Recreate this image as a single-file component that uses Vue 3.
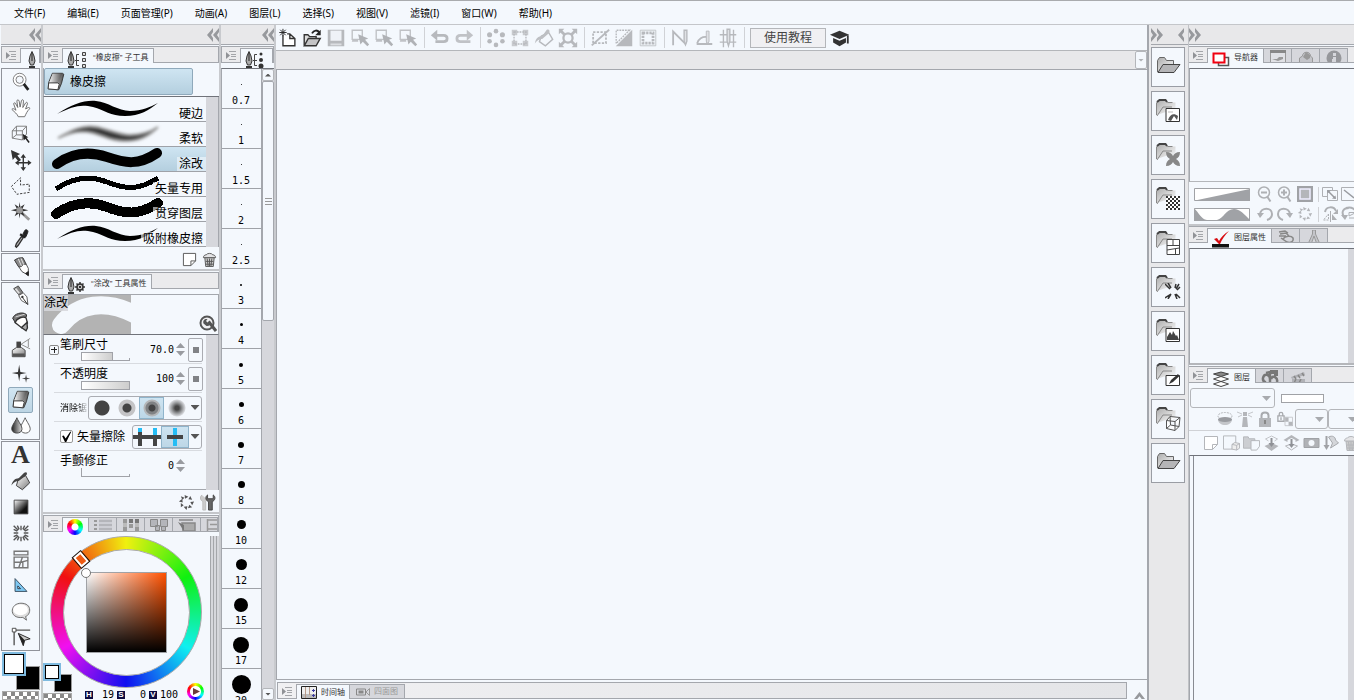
<script setup>
import { h, ref } from 'vue'

const Icon = (props) =>
  h('svg', { class: 'icon', width: props.w || 24, height: props.h || props.w || 24, 'aria-hidden': 'true' }, [
    h('use', { href: '#' + props.n })
  ])
Icon.props = ['n', 'w', 'h']

const menus = ['文件(F)', '编辑(E)', '页面管理(P)', '动画(A)', '图层(L)', '选择(S)', '视图(V)', '滤镜(I)', '窗口(W)', '帮助(H)']

const toolGroups = [
  ['zoom', 'hand', 'cube', 'move', 'lasso', 'wand', 'dropper'],
  ['pencil'],
  ['pen', 'marker', 'airbrush', 'sparkle', 'eraser', 'blend'],
  ['letter', 'bucket', 'gradient', 'burst', 'frame', 'ruler', 'balloon', 'correct']
]
const activeTool = ref('eraser')

const commandGroups = [
  ['new', 'open', 'save', 'selcur', 'selcur', 'selcur'],
  ['undo', 'redo'],
  ['spin', 'corners', 'fillarea', 'expand'],
  ['desel', 'invsel', 'border'],
  ['snap1', 'snap2', 'snap3']
]

const brushes = ['硬边', '柔软', '涂改', '矢量专用', '贯穿图层', '吸附橡皮擦']
const activeBrush = ref(2)

const sizes = [
  ['0.7', 1], ['1', 1], ['1.5', 1], ['2', 1], ['2.5', 1], ['3', 2], ['4', 3], ['5', 4], ['6', 5],
  ['7', 6], ['8', 7], ['10', 9], ['12', 11], ['15', 14], ['17', 16], ['20', 19]
]

const sliders = [
  { id: 'size', label: '笔刷尺寸', value: '70.0', fill: 31, plus: true },
  { id: 'opacity', label: '不透明度', value: '100', fill: 48 }
]
const aa = ref(2)
const vec = ref(1)
const vecOn = ref(true)

const materials = ['', 'm-photo', 'm-cross', 'm-check', 'm-frame', 'm-burst', 'm-mount', 'm-pen', 'm-cube', '']
const hsv = [['H', '19'], ['S', '0'], ['V', '100']]
</script>

<template>
  <div class="app">
    <svg class="defs" aria-hidden="true">
      <defs>
        <linearGradient id="gm" x1="0" y1="0" x2="1" y2="1"><stop offset="0" stop-color="#fff" /><stop offset="1" stop-color="#777" /></linearGradient>
        <linearGradient id="ge" x1="0" y1="0" x2="1" y2="0"><stop offset="0" stop-color="#eee" /><stop offset="1" stop-color="#555" /></linearGradient>
        <linearGradient id="gk" x1="0" y1="0" x2="1" y2="1"><stop offset="0" stop-color="#fff" /><stop offset=".7" stop-color="#111" /></linearGradient>
        <linearGradient id="gh" x1="0" y1="0" x2="1" y2="0"><stop offset="0" stop-color="#222" /><stop offset="1" stop-color="#ddd" /></linearGradient>
        <linearGradient id="gf" x1="0" y1="0" x2="1" y2="1"><stop offset="0" stop-color="#aaa" /><stop offset=".6" stop-color="#ddd" /><stop offset="1" stop-color="#f4f8fd" /></linearGradient>
        <filter id="soft" x="-10%" y="-30%" width="120%" height="160%"><feGaussianBlur stdDeviation="1.8" /></filter>
      </defs>

      <symbol id="grip" viewBox="0 0 10 9"><path d="M0 1l4 3.5L0 8z" fill="#909296" /><path d="M3 .5h7M5 3.5h5M5 5.5h5M3 8.5h7" stroke="#a3a5a9" /></symbol>
      <symbol id="chl" viewBox="0 0 12 14"><path d="M6 0L0 7l6 7V10L4 7l2-3zM12 0L6 7l6 7V10L10 7l2-3z" fill="#97999d" /></symbol>
      <symbol id="chr" viewBox="0 0 12 14"><path d="M0 0l6 7-6 7V10l2-3L0 4zM6 0l6 7-6 7V10l2-3-2-3z" fill="#97999d" /></symbol>
      <symbol id="ch1" viewBox="0 0 6 14"><path d="M6 0L0 7l6 7V10L4 7l2-3z" fill="#97999d" /></symbol>
      <symbol id="nib" viewBox="0 0 8 18"><path d="M4 .5L2 5l-1 5 1.500 4h3L7 10 6 5z" fill="#aaa" stroke="#333" /><path d="M4 2v8" stroke="#222" /><path d="M1 15h6v2H1z" fill="#333" /></symbol>
      <symbol id="tree" viewBox="0 0 12 18"><path d="M4 3.500H1.500v11H4M0 9.500h4" fill="none" stroke="#444" /><path d="M7.500 1.500h3v3h-3zM7.500 7.500h3v3h-3zM7.500 13.500h3v3h-3z" fill="#ddd" stroke="#444" /></symbol>
      <symbol id="dots" viewBox="0 0 12 18"><path d="M4 3.500H1.500v11H4M0 9.500h4" fill="none" stroke="#444" /><g fill="#333"><circle cx="8" cy="3" r="1.500" /><circle cx="8" cy="9" r="2" /><circle cx="8" cy="15" r="2.500" /></g></symbol>
      <symbol id="gear" viewBox="0 0 10 10"><path d="M5 0v10M0 5h10M1.500 1.500l7 7M8.500 1.500l-7 7" stroke="#333" stroke-width="1.500" /><circle cx="5" cy="5" r="3" fill="#ccc" stroke="#333" stroke-width="1.500" /><circle cx="5" cy="5" r="1" /></symbol>

      <symbol id="zoom" viewBox="0 0 24 24"><circle cx="10.500" cy="9.500" r="7" fill="#fff" stroke="#777" /><circle cx="10.500" cy="9.500" r="4" fill="#f4f8fd" stroke="#777" /><path d="M15 14l5 6.500" stroke="#222" stroke-width="3" /></symbol>
      <symbol id="hand" viewBox="0 0 24 24"><path d="M9 21.500c-1-3-4-5-7-8 1-1.500 3-.5 4.500 1L4 7.500c0-1.500 1.800-1.500 2.300 0l2.200 4-1-7c0-1.800 2-1.800 2.500 0l1 6.500 1.500-7c.5-1.600 2.300-1.200 2.200.5L14 11.500l3-5c.9-1.400 2.400-.6 2 1l-2 5.500 3-1.500c1.500-.5 2 1 1 1.800-2 1.700-3.500 5-5 8.200z" fill="#fff" stroke="#666" /></symbol>
      <symbol id="cube" viewBox="0 0 24 24"><path d="M2.500 8.500h11v10l-11-2zM2.500 8.500L7 3.500h11l-4.500 5M18 3.500V12l-4.500 6.500M7 3.500V13h8M7 13l-4.500 3.500" fill="none" stroke="#777" /><path d="M14 12l6 3.500-2 .7 3.500 4.500-1.300 1-3.500-4.500L15 19z" fill="#222" /></symbol>
      <symbol id="move" viewBox="0 0 24 24"><path d="M1 1l10 4.500-3 1.500 4 5-2.500 2-4-5L3 12z" fill="#333" /><path d="M14.500 8v14M7 15h15" stroke="#333" stroke-width="1.500" /><path d="M14.500 5.500l3 4h-6zM14.500 24l3-4h-6zM5.500 15l4-3v6zM23.500 15l-4-3v6z" fill="#333" /></symbol>
      <symbol id="lasso" viewBox="0 0 24 24"><path d="M1.500 12.500l10-9.500v8l9.500-1v9L7.500 21z" fill="none" stroke="#333" stroke-dasharray="2.500 1.500" /></symbol>
      <symbol id="wand" viewBox="0 0 24 24"><path d="M13 13l8 7.500" stroke="#999" stroke-width="3" /><path d="M10.500 1l.8 5.500L16 3.500l-2.500 5 6.500 1.500-6.500 1.500 2.500 5-4.700-3-.8 5.500-.8-5.500-4.700 3 2.500-5L1 10l6.500-1.500L5 3.500l4.700 3z" fill="#333" /><circle cx="10.500" cy="10" r="3.500" fill="#999" /></symbol>
      <symbol id="dropper" viewBox="0 0 24 24"><path d="M12.500 10.500l2 1L9 20l-2 2-1-1 1-3z" fill="#bbb" stroke="#333" stroke-width="1.500" /><path d="M11 8l6 3.500" stroke="#222" stroke-width="2.500" /><path d="M14 8l2-4c1-2 4-1 3.500 1.500l-2 5z" fill="#222" stroke="#222" /></symbol>
      <symbol id="pencil" viewBox="0 0 24 24"><path d="M5 4.500l4-2 5-.5 6 11.500v7.500l-7-4z" fill="#fff" stroke="#444" /><path d="M5 4.500l4-2 5-.5 3.500 7-3 0-2 2.500-3 .5z" fill="#8a8a8a" stroke="#444" /><path d="M9 3l3.500 8M12 2.500l3 7" stroke="#e8e8e8" /><path d="M17 19l3 2.500V17z" fill="#222" stroke="#222" /></symbol>
      <symbol id="pen" viewBox="0 0 24 24"><path d="M4 4l5-3 5 7-4 3z" fill="#888" stroke="#444" /><path d="M6 4l4 5" stroke="#ddd" stroke-width="2" /><path d="M9.500 11.500l5-3 4 4.500 1 8-7-4z" fill="#fff" stroke="#555" /><path d="M13.500 13.500l6 8" stroke="#222" /><circle cx="13.500" cy="13" r="1.300" fill="#333" /></symbol>
      <symbol id="marker" viewBox="0 0 24 24"><path d="M3 8c1-5 11-8 15-4v2l-12 7z" fill="#777" stroke="#222" /><path d="M6 6.500l10-3" stroke="#ddd" /><path d="M5.500 12.500c2-5 9-7 12-5L19 13l-6 5.500z" fill="#fff" stroke="#333" stroke-width="1.500" /><path d="M12.500 18l6-5.500.5 6-1.500 3z" fill="#aaa" stroke="#333" stroke-width="1.500" /></symbol>
      <symbol id="airbrush" viewBox="0 0 24 24"><path d="M2.500 14.500L7 11.500h5.500l4 3v7h-14z" fill="url(#gm)" stroke="#444" /><path d="M7 5h5v6H7z" fill="#444" /><path d="M12 8l10-6.500M12 8l10 5M20 3v8" fill="none" stroke="#888" /><path d="M3 18h13v3H3z" fill="#555" /></symbol>
      <symbol id="sparkle" viewBox="0 0 24 24"><path d="M10 2l1.300 7.700L18 11l-6.700 1.300L10 20l-1.300-7.700L2 11l6.700-1.300z" fill="#333" /><path d="M17.500 12.500l.8 3.700 3.700.8-3.700.8-.8 3.700-.8-3.700-3.700-.8 3.700-.8z" fill="#444" /></symbol>
      <symbol id="eraser" viewBox="0 0 24 24"><path d="M8 2.500h11l1.500 1-2.500 10-3 7-11.500-1 .5-7z" fill="url(#ge)" stroke="#333" stroke-linejoin="round" /><path d="M8.500 3h10L15 12H5z" fill="url(#ge)" /><path d="M4 13h10l1.500 1.500L14 20.500l-10.500-1z" fill="#fff" stroke="#333" stroke-linejoin="round" /></symbol>
      <symbol id="blend" viewBox="0 0 24 24"><path d="M16.500 3c2 5 6 9 5.500 13-1 5-9 5-10.500 0-.8-4 3-8 5-13z" fill="#fff" stroke="#555" /><path d="M7.500 3c2 5 6 9 5.500 13-1 5-10 5-11 0C1.200 12 5.500 8 7.500 3z" fill="url(#gh)" stroke="#444" /></symbol>
      <symbol id="bucket" viewBox="0 0 24 24"><path d="M9 10l8-4 4.500 8-8 7.500L7 17z" fill="url(#gm)" stroke="#333" /><path d="M1.500 17c1-5 4-8 8-8l6-6c3-2 4 1 2 3l-8 6c-3 0-5 1-8 5z" fill="#444" /></symbol>
      <symbol id="gradient" viewBox="0 0 24 24"><path d="M4.500 4.500h15v15h-15z" fill="url(#gk)" stroke="#444" /></symbol>
      <symbol id="burst" viewBox="0 0 24 24"><path d="M12 4v5M12 16v5M4 12h5M15 12h5M4 4l5 5M20 4l-5 5M4 20l5-5M20 20l-5-5M8 4l2 4M16 4l-2 4M4 8l4 2M20 8l-4 2M4 16l4-2M20 16l-4-2M8 20l2-4M16 20l-2-4" stroke="#555" stroke-width="1.500" /></symbol>
      <symbol id="frame" viewBox="0 0 24 24"><path d="M4.500 3.500h15v4h-15zM4.500 10h15v11.500h-15zM4.500 15.500h7.500l7.500-2M13.500 10l-4 11.500M14 15v6.500" fill="none" stroke="#777" stroke-width="1.500" /></symbol>
      <symbol id="ruler" viewBox="0 0 24 24"><path d="M5.500 5v14h13z" fill="#7ec8f2" stroke="#36495a" /><path d="M8.500 13v3h3z" fill="#f4f8fd" stroke="#234" /></symbol>
      <symbol id="balloon" viewBox="0 0 24 24"><path d="M12 3.500c6 0 9.500 3 9.500 7.500S18 18 17 18l1 4-4-3c-8 1-12-3-11.500-8 .5-4 4-7.500 9.500-7.500z" fill="#ddd" stroke="#666" /><ellipse cx="11.500" cy="10.500" rx="8" ry="6" fill="#fff" /></symbol>
      <symbol id="correct" viewBox="0 0 24 24"><path d="M5 4.500h17M4.500 5v16" stroke="#555" stroke-width="1.500" /><path d="M2.500 2.500h4v4h-4z" fill="#fff" stroke="#444" /><path d="M9 8l13 6-6 1.500-1.500 6z" fill="#ccc" stroke="#222" /><path d="M9 8l7 7.500-1.500 6z" fill="#222" /></symbol>

      <symbol id="new" viewBox="0 0 24 24"><path d="M6.500 9v11.500h13v-8L14 7.500h-3M14 7.500v5h5.500" fill="#fff" stroke="#333" stroke-width="1.500" /><path d="M6.500 2v8M2.500 6h8M3.500 3l6 6M9.500 3l-6 6" stroke="#222" /></symbol>
      <symbol id="open" viewBox="0 0 24 24"><path d="M3.500 20V8.500h4l2 2h7V13" fill="#ddd" stroke="#333" stroke-width="1.500" /><path d="M3.500 20.500L8 12.500h13l-4.500 8z" fill="#c4c4c6" stroke="#333" stroke-width="1.500" /><path d="M12 7c2-4 6-4 8-1" fill="none" stroke="#222" stroke-width="2" /><path d="M21.500 3v6h-6z" fill="#222" /></symbol>
      <symbol id="save" viewBox="0 0 24 24"><path d="M3 3h18v18H3z" fill="#b7b9bd" /><path d="M6 4h12v11H6z" fill="#eff2f7" /><path d="M6 18h12v2H6z" fill="#dcdee2" /></symbol>
      <symbol id="selcur" viewBox="0 0 24 24"><path d="M3.500 3.500h11v10h-11z" fill="none" stroke="#c0c2c6" stroke-width="1.500" /><path d="M4 13h6v3H3z" fill="#c0c2c6" /><path d="M10 8l11 4.500-3.500 1.500 4.500 5-2 2-5-5-2.500 3z" fill="#b0b2b6" /></symbol>
      <symbol id="undo" viewBox="0 0 24 24"><path d="M7 9h9c5 0 5 7 0 7H7" fill="none" stroke="#b7b9bd" stroke-width="3" /><path d="M2 9l7-6v12z" fill="#b7b9bd" /></symbol>
      <symbol id="redo" viewBox="0 0 24 24"><path d="M17 9H8c-5 0-5 7 0 7h11" fill="none" stroke="#c0c2c6" stroke-width="3" /><path d="M22 9l-7-6v12z" fill="#c0c2c6" /></symbol>
      <symbol id="spin" viewBox="0 0 24 24"><g fill="#b7b9bd"><circle cx="12" cy="4.500" r="2.500" /><circle cx="12" cy="19.500" r="2.500" /><circle cx="5" cy="8.500" r="2.800" /><circle cx="19" cy="8.500" r="2.800" /><circle cx="5" cy="15.500" r="2.500" /><circle cx="19" cy="15.500" r="2.500" /></g></symbol>
      <symbol id="corners" viewBox="0 0 24 24"><path d="M3 3h6v6H3zM15 3h6v6h-6zM3 15h6v6H3zM15 15h6v6h-6z" fill="#c8cace" /><path d="M5.500 5.500h13v13h-13z" fill="none" stroke="#b7b9bd" stroke-width="1.500" stroke-dasharray="2 1" /></symbol>
      <symbol id="fillarea" viewBox="0 0 24 24"><path d="M9 10l8-4 4.500 7.500-8 7L7 16z" fill="none" stroke="#b7b9bd" stroke-width="1.500" /><path d="M2 18c1-6 4-8 8-8l5-7c3-1 4 2 2 4l-7 6c-3 0-5 1-8 5z" fill="#bdbfc3" /></symbol>
      <symbol id="expand" viewBox="0 0 24 24"><path d="M4 4l16 16M20 4L4 20" stroke="#b7b9bd" stroke-width="3" /><circle cx="12" cy="12" r="5" fill="#f4f8fd" stroke="#b7b9bd" stroke-width="2.500" /><path d="M2 2h6L2 8zM22 2h-6l6 6zM2 22h6l-6-6zM22 22h-6l6-6z" fill="#b7b9bd" /></symbol>
      <symbol id="desel" viewBox="0 0 24 24"><path d="M4.500 5.500h14v12h-14z" fill="none" stroke="#b7b9bd" stroke-width="2" stroke-dasharray="2.500 1.500" /><path d="M3 20L22 3" stroke="#b7b9bd" stroke-width="2" /></symbol>
      <symbol id="invsel" viewBox="0 0 24 24"><path d="M21 3v18H3z" fill="#b7b9bd" /><path d="M18 3.500H3.500V18L18 3.500z" fill="none" stroke="#b7b9bd" stroke-width="1.500" stroke-dasharray="2 1" /></symbol>
      <symbol id="border" viewBox="0 0 24 24"><path d="M3.500 3.500h17v17h-17z" fill="none" stroke="#c0c2c6" /><path d="M6.500 6.500h11v11h-11z" fill="none" stroke="#b7b9bd" stroke-width="3" stroke-dasharray="2.500 1" /></symbol>
      <symbol id="snap1" viewBox="0 0 24 24"><path d="M4.500 20V5l14 14" fill="none" stroke="#b7b9bd" stroke-width="2" /><path d="M16.500 3.500h3v12l-1.500 4-1.500-4z" fill="#dfe1e5" stroke="#b7b9bd" stroke-width="1.500" /></symbol>
      <symbol id="snap2" viewBox="0 0 24 24"><path d="M4 18.500h17M4.500 18c1-5 6-8 11-7v7" fill="none" stroke="#b7b9bd" stroke-width="2" /><path d="M14.500 4.500h3v11l-1.500 3-1.500-3z" fill="#dfe1e5" stroke="#b7b9bd" /></symbol>
      <symbol id="snap3" viewBox="0 0 24 24"><path d="M3 8.500h18M3 16.500h18M7 3v19M18 3v19" stroke="#b7b9bd" stroke-width="1.500" /><path d="M11 2.500h3v13l-1.500 5-1.500-5z" fill="#dfe1e5" stroke="#b7b9bd" stroke-width="1.500" /></symbol>
      <symbol id="hat" viewBox="0 0 24 24"><path d="M11.500 4L22 8.500 11.500 13 1 8.500z" fill="#333" /><path d="M4.500 12l7 3 7-3v5l-7 4-7-4z" fill="#333" /><path d="M20.500 9v9" stroke="#333" stroke-width="2" /></symbol>

      <symbol id="page" viewBox="0 0 16 16"><path d="M1.500 1.500h13v8l-5 5h-8zM9.500 14.500v-5h5" fill="#fff" stroke="currentColor" /></symbol>
      <symbol id="trash" viewBox="0 0 16 16"><path d="M3 6l1 9.500h8L13 6z" fill="#ccc" stroke="currentColor" /><path d="M5.500 7l1 8M8 7v8M10.500 7l-1 8M4 10h8M4 13h8" stroke="currentColor" /><path d="M1.500 6c0-2 1.500-3 3-3 1-2 6-2 7 0 1.500 0 3 1 3 3z" fill="#e4e4e6" stroke="currentColor" /></symbol>
      <symbol id="wrenchmag" viewBox="0 0 18 18"><circle cx="8" cy="8" r="6.500" fill="#f0f0f2" stroke="#555" stroke-width="2" /><path d="M9.500 6.500L17 16" stroke="#555" stroke-width="3" /><path d="M4.500 8.500c-1-3 1-5 4-4.500L7 6l2 2 2.500-1c.5 2.500-1.500 4.500-4 4z" fill="#555" /></symbol>
      <symbol id="reset" viewBox="0 0 18 18"><g fill="currentColor"><path d="M7 1l4 2-3.500 2zM13 2l2 4-4-.5zM17 8l-2 4-2-3.500zM15 14l-4.500 1 1.500-3.500zM9 17l-3-3.500 4-.5zM3 14l0-4.500L6 12zM1 8l3.500-3 .5 4zM3 2.500L7 4 4.500 6z" /></g></symbol>
      <symbol id="wrench" viewBox="0 0 18 18"><path d="M2 1c-3 3-1 6 1 7v9h3V8l2-2" fill="#ccc" stroke="#bbb" /><path d="M8 1C5 3 6 7 9 8v9h4V8c3-1 4-5 1-7v4h-6z" fill="#666" stroke="#444" /></symbol>
      <symbol id="vec1" viewBox="0 0 28 20"><path d="M0 10h28" stroke="#444" stroke-width="4" /><path d="M7 5v14M22 8v11" stroke="#444" stroke-width="4" /><path d="M7 1v4M22 1v7" stroke="#25bdf5" stroke-width="4" /></symbol>
      <symbol id="vec2" viewBox="0 0 28 20"><path d="M14 1v18" stroke="#25bdf5" stroke-width="4" /><path d="M6 10h16" stroke="#444" stroke-width="4" /></symbol>

      <symbol id="folder" viewBox="0 0 30 26"><path d="M4.500 18V6.500l2-3h5l2 3h7v4" fill="url(#gf)" stroke="#666" /><path d="M5 18.500l5-8h17l-6 8z" fill="#b5b5b7" stroke="#444" /></symbol>
      <symbol id="folder2" viewBox="0 0 30 30"><path d="M3.500 19V7l3-3.500h6l2 3h8v9h-8z" fill="url(#gf)" /><path d="M3.500 19V7l3-3.500h6l2 3h5M4 20l6-9h9" fill="none" stroke="#888" /><path d="M4 6l2.500-2h6l1.500 2" stroke="#444" stroke-width="2" fill="none" /></symbol>
      <symbol id="m-photo" viewBox="0 0 16 16"><path d="M1 1.500h13.500v13H1z" fill="#fff" stroke="#333" /><path d="M3 13c2-6 6-7 10-4l-1 4-3-4-3 5z" fill="#555" /><path d="M3 5h5" stroke="#bbb" /></symbol>
      <symbol id="m-cross" viewBox="0 0 16 16"><path d="M1 1c4 0 6 2 7 4 1-2 3-4 7-4 0 4-2 6-4 7 2 1 4 3 4 7-4 0-6-2-7-4-1 2-3 4-7 4 0-4 2-6 4-7-2-1-4-3-4-7z" fill="#888" /></symbol>
      <symbol id="m-check" viewBox="0 0 16 16"><path d="M1 1h14v14H1z" fill="#fff" /><path d="M1 2h14M1 6h14M1 10h14M1 14h14" stroke="#333" stroke-width="2" stroke-dasharray="2 2" /><path d="M3 4h12M3 8h12M3 12h12" stroke="#333" stroke-width="2" stroke-dasharray="2 2" /></symbol>
      <symbol id="m-frame" viewBox="0 0 16 16"><path d="M2 .5h12.500v15H2zM2 6.500h12.500M8 .5v6M2 11l6-1 6.500-1M10.500 10v5.500" fill="#fff" stroke="#444" /></symbol>
      <symbol id="m-burst" viewBox="0 0 16 16"><path d="M0 1l5 5M14 1l-3 5M0 15l6-4M15 15l-4-4M3 0l3 5M11 1l-1 4M3 16l3-5M10 11l2 5M15 4l-3 3" stroke="#333" stroke-width="1.500" /></symbol>
      <symbol id="m-mount" viewBox="0 0 16 16"><path d="M1 1.500h13.500v13H1z" fill="#fff" stroke="#333" /><path d="M2 13V10l3-5 2 3 1-4 3 5 1-1 2 5z" fill="#444" /></symbol>
      <symbol id="m-pen" viewBox="0 0 16 16"><path d="M1 4.500h13.500v10H1z" fill="#fff" stroke="#333" /><path d="M4 13l2-4 7-6 1.500 2L8 11z" fill="#333" /></symbol>
      <symbol id="m-cube" viewBox="0 0 16 16"><path d="M1.500 5.500L5 1.500l10 1-1 9-4 4-8.500-2zM1.500 5.500l8.500 1 5-4M10 6.500v9M5 1.500L5.500 10l8.500 1.500M5.500 10l-4 3.500" fill="#fff" fill-opacity=".8" stroke="#555" /></symbol>

      <symbol id="redrect" viewBox="0 0 18 15"><path d="M6.500 5.500h10v8h-10z" fill="#fff" stroke="#555" stroke-width="1.500" /><path d="M1.500 1.500h11v9h-11z" fill="#fff" stroke="#f00010" stroke-width="2" /></symbol>
      <symbol id="redcheck" viewBox="0 0 18 17"><path d="M0 13h17v3.500H0z" fill="#111" /><path d="M2 8l3-1 2 3c2-4 5-7 10-10-4 4-7 8-9 13H7z" fill="#d80a10" /></symbol>
      <symbol id="t-img" viewBox="0 0 16 13"><path d="M.5 .5h15V13H.5z" fill="#e0e1e5" stroke="#999" /><path d="M0 0h16v3H0z" fill="#888" /><path d="M2 9h5l2-2h4v2l-5 2z" fill="#999" /></symbol>
      <symbol id="t-ball" viewBox="0 0 16 13"><path d="M1.500 12.500V8l3-2c0-5 8-5 8 0l2 2v4.500z" fill="#c4c5ca" stroke="#999" /><path d="M5 7l3-5 4 3v3l-3 2z" fill="#999" /></symbol>
      <symbol id="t-info" viewBox="0 0 16 13"><circle cx="8" cy="8" r="7.500" fill="#96979b" /><path d="M7 7h3v6H6V9h1zM7 3h3v3H7z" fill="#d6d7dc" /></symbol>
      <symbol id="t-anim" viewBox="0 0 16 13"><path d="M1 2l6-1 3 2M2 4l6-1 3 3M1 6l7 0M5 9c2-3 8-4 10-1 1 4-3 5-6 4L3 8" fill="none" stroke="#888" stroke-width="1.500" /></symbol>
      <symbol id="t-comp" viewBox="0 0 16 13"><path d="M6.500 0h3v4l4 9h-3L8 6l-2.500 7h-3l4-9z" fill="#c4c5ca" stroke="#999" /></symbol>
      <symbol id="layers" viewBox="0 0 18 16"><path d="M1.500 3L9 1l7.500 2L9 5.500z" fill="#888" stroke="#444" /><path d="M1.500 13L9 10.500l7.500 2.500L9 15.500zM1.500 8L9 5.500 16.500 8 9 10.500z" fill="#fff" stroke="#444" /></symbol>
      <symbol id="t-hist" viewBox="0 0 18 13"><path d="M9 0h8v6h-4V4H9z" fill="#777" /><path d="M9 9c0-5-6-6-7-1-.5 3 1 4 3 4.500M5 3l4-1v5M10 9c2-5 7-1 6 3M9 8v5" fill="none" stroke="#777" stroke-width="2.500" /></symbol>
      <symbol id="t-clap" viewBox="0 0 16 13"><path d="M1 7l13-5 1 3-13 4zM2 9h13v4H2z" fill="#b0b1b6" /><path d="M4 6l2 3M8 5l2 3M12 3l2 3M4 13l2-4M9 13l2-4" stroke="#888" stroke-width="1.500" /></symbol>
      <symbol id="t-list" viewBox="0 0 18 12"><path d="M0 2h3M0 6h3M0 10h3" stroke="#999" stroke-width="2" /><path d="M5 2h13M5 6h13M5 10h13" stroke="#b4b5ba" stroke-width="2.500" /></symbol>
      <symbol id="t-grid" viewBox="0 0 16 12"><path d="M0 0h4v4H0zM6 5h4v4H6zM0 8h4v4H0zM12 8h4v4h-4z" fill="#999" /><path d="M6 0h4v4H6zM12 0h4v4h-4z" fill="#777" /><path d="M0 4h4v4H0zM12 4h4v4h-4z" fill="#bbb" /></symbol>
      <symbol id="t-mix" viewBox="0 0 18 12"><path d="M0.500 .5h7v7h-7zM10.500 .5h7v7h-7zM5.500 6.500h4v5h-4zM11.500 7.500h4v4h-4z" fill="#b4b5ba" stroke="#888" /></symbol>
      <symbol id="t-app" viewBox="0 0 18 12"><path d="M1 1h14M4 4h13v8H5z" fill="#aaa" stroke="#888" stroke-width="1.500" /><path d="M0 3l6 3v6z" fill="#777" /></symbol>
      <symbol id="t-book" viewBox="0 0 18 12"><path d="M1.500 0v12M1 1h17M4 5.500h14M1 10h17" stroke="#999" stroke-width="1.500" /></symbol>
      <symbol id="timeline" viewBox="0 0 16 13"><path d="M.5 .5h15v12H.5z" fill="#eee" stroke="#222" /><path d="M1 8h14v4H1z" fill="#bbb" /><path d="M4.500 1v11M8.500 1v8" stroke="#b59a8a" /><path d="M12.500 3v3M12.500 8v3M11 4.500h3M11 9.500h3" stroke="#3a3aa0" /></symbol>
      <symbol id="camera" viewBox="0 0 14 8"><path d="M.5 1h9v6h-9z" fill="none" stroke="#888" /><path d="M2.500 2.500h5v3h-5z" fill="#888" /><path d="M10 4l3.500-3.500v7z" fill="none" stroke="#999" /></symbol>

      <symbol id="zout" viewBox="0 0 16 16"><circle cx="7" cy="6.500" r="5.500" fill="none" stroke="#aeb0b4" stroke-width="1.500" /><path d="M4 6.500h6M10.500 11l3 4.500" stroke="#aeb0b4" stroke-width="2" /></symbol>
      <symbol id="zin" viewBox="0 0 16 16"><circle cx="7" cy="6.500" r="5.500" fill="none" stroke="#aeb0b4" stroke-width="1.500" /><path d="M4 6.500h6M7 3.500v6M10.500 11l3 4.500" stroke="#aeb0b4" stroke-width="2" /></symbol>
      <symbol id="fit" viewBox="0 0 16 16"><path d="M0 0h16v16H0z" fill="#a0a2a6" /><path d="M3 3h10v10H3z" fill="#b4b6ba" stroke="#eef" stroke-width="1.500" /></symbol>
      <symbol id="fit2" viewBox="0 0 16 16"><path d="M.5 1.500h10v9H.5z" fill="none" stroke="#aeb0b4" /><path d="M5.500 4.500h10v10h-10z" fill="#f4f8fd" stroke="#aeb0b4" /><path d="M6 5l7 7" stroke="#999ba0" stroke-width="1.500" /><path d="M5 4l4 .5-3.500 3zM14 13l-4-.5 3.500-3z" fill="#999ba0" /></symbol>
      <symbol id="fit3" viewBox="0 0 16 16"><path d="M.5 1.500h15v13H.5z" fill="none" stroke="#aeb0b4" /><path d="M3 4l10 8" stroke="#999ba0" stroke-width="1.500" /></symbol>
      <symbol id="rotl" viewBox="0 0 16 16"><path d="M3 8c1-7 12-7 12 0 0 3-2 5-5 6" fill="none" stroke="#aeb0b4" stroke-width="2" /><path d="M0 7h7l-4 5z" fill="#aeb0b4" /></symbol>
      <symbol id="rotr" viewBox="0 0 16 16"><path d="M13 8C12 1 1 1 1 8c0 3 2 5 5 6" fill="none" stroke="#aeb0b4" stroke-width="2" /><path d="M16 7H9l4 5z" fill="#aeb0b4" /></symbol>
      <symbol id="fliph" viewBox="0 0 16 16"><path d="M3 6c1-6 9-6 11-1" fill="none" stroke="#aeb0b4" stroke-width="2" /><path d="M16 3v5h-5zM10 8l5 6h-5z" fill="#aeb0b4" /><path d="M6.500 8v6H1.500z" fill="none" stroke="#aeb0b4" stroke-dasharray="2 1" /><path d="M8.500 5v11" stroke="#aeb0b4" /></symbol>
      <symbol id="flipv" viewBox="0 0 16 16"><path d="M8 2C2 2 0 6 3 11M5 2c6-2 10 2 10 5" fill="none" stroke="#aeb0b4" stroke-width="2" /><path d="M0 9h7l-3 5z" fill="#aeb0b4" /><path d="M8 6.500h7L8 10zM8 12h7" stroke="#aeb0b4" fill="none" /></symbol>
      <symbol id="l-clip" viewBox="0 0 16 16"><ellipse cx="8" cy="5" rx="7" ry="3.500" fill="none" stroke="#b4b6ba" stroke-dasharray="2 1" /><path d="M1 8h14c0 8-14 8-14 0z" fill="#c4c6ca" /><ellipse cx="8" cy="8.500" rx="7" ry="2.500" fill="#999ba0" /></symbol>
      <symbol id="l-light" viewBox="0 0 16 16"><path d="M6 6h4l1 10H5zM6 1h4v4H6z" fill="#b4b6ba" /><path d="M0 1l5 2M16 1l-5 2M1 6l4-2M15 6l-4-2" stroke="#c4c6ca" /></symbol>
      <symbol id="l-lock" viewBox="0 0 16 16"><path d="M4.500 8V4.500c0-4 7-4 7 0V8" fill="none" stroke="#a8aaae" stroke-width="2" /><path d="M2 7h12v9H2z" fill="#b4b6ba" /><path d="M8 9v4" stroke="#888" stroke-width="2" /></symbol>
      <symbol id="l-lockt" viewBox="0 0 18 16"><path d="M2.500 4V2.500c0-2.500 4-2.500 4 0V4M1 4.500h7v6H1zM4.500 6v3" fill="none" stroke="#a8aaae" stroke-width="1.500" /><path d="M9 6h4v5H9zM13 11h5v5h-5z" fill="#b4b6ba" /><path d="M9 6h8.500v9.500H9z" fill="none" stroke="#c4c6ca" /></symbol>
      <symbol id="l-new3" viewBox="0 0 18 16"><path d="M.5 .5h13v8l-4 6h-9z" fill="#f4f8fd" stroke="#b4b6ba" /><path d="M9.500 9.500l3-2 5 1v5l-3 2-5-1zM9.500 9.500l5 1v5M14.500 10.500l3-2" fill="#eee" stroke="#b4b6ba" /></symbol>
      <symbol id="l-fold" viewBox="0 0 18 16"><path d="M.5 1.500h5l1 2h6v10H.5z" fill="#ccced2" stroke="#b4b6ba" /><path d="M8.500 5.500h9v6l-3 4h-6z" fill="#f4f8fd" stroke="#b4b6ba" /></symbol>
      <symbol id="l-down" viewBox="0 0 16 16"><path d="M1 11l7-3 7 3-7 5z" fill="#b4b6ba" /><path d="M2 4l6-3 6 3-3 2M2 4l3 2" fill="none" stroke="#c4c6ca" /><path d="M7 3h2v5h2l-3 4-3-4h2z" fill="#8f9196" /></symbol>
      <symbol id="l-up" viewBox="0 0 16 16"><path d="M0 5l8-5 8 5-4 2V5L8 3 4 5v2z" fill="#b4b6ba" /><path d="M2 11l6-2 6 2-6 4z" fill="none" stroke="#b4b6ba" /><path d="M7 4h2v5h2l-3 4-3-4h2z" fill="#8f9196" /></symbol>
      <symbol id="l-mask" viewBox="0 0 16 16"><path d="M.5 3.500h15v9H.5z" fill="#b0b2b6" stroke="#a0a2a6" /><circle cx="8" cy="8" r="3" fill="#f4f8fd" /></symbol>
      <symbol id="l-apply" viewBox="0 0 16 16"><path d="M3 1v10" stroke="#a0a2a6" stroke-width="2" /><path d="M0 10h6l-3 5z" fill="#a0a2a6" /><path d="M5 2c4-2 7 0 7 3l3 3-8 5 2-5z" fill="#d4d6da" stroke="#a8aaae" /></symbol>
    </svg>

    <nav class="menubar"><button v-for="m in menus" :key="m">{{ m }}</button></nav>

    <div class="workspace">
      <aside class="col tools">
        <header class="fold end"><Icon n="chl" :w="12" :h="14" /></header>
        <div class="tabs"><button class="grip" aria-label="菜单"><Icon n="grip" :w="10" :h="9" /></button><button class="tab active grow" aria-label="工具"><Icon n="nib" :w="8" :h="18" /></button></div>
        <div class="toolset">
          <div v-for="(g, i) in toolGroups" :key="i" class="toolgroup">
            <button v-for="t in g" :key="t" :class="{ on: activeTool === t }" :aria-label="t" @click="activeTool = t">
              <span v-if="t === 'letter'" class="letter">A</span>
              <Icon v-else :n="t" :w="22" />
            </button>
          </div>
        </div>
        <div class="swatches big"><i class="back"></i><i class="front"></i><i class="clear"></i></div>
      </aside>

      <aside class="col sub">
        <header class="fold end"><Icon n="chl" :w="12" :h="14" /></header>
        <div class="tabs">
          <button class="grip" aria-label="菜单"><Icon n="grip" :w="10" :h="9" /></button>
          <button class="tab active"><Icon n="nib" :w="8" :h="18" /><Icon n="tree" :w="12" :h="18" /><span class="tabtext wide">“橡皮擦” 子工具</span></button>
        </div>
        <section class="groupbar"><button><Icon n="eraser" :w="22" />橡皮擦</button></section>
        <section class="brushes">
          <div class="list">
            <button v-for="(b, i) in brushes" :key="b" :class="{ on: i === activeBrush }" @click="activeBrush = i">
              <svg width="122" height="24" viewBox="0 0 122 24" aria-hidden="true">
                <path v-if="i === 0 || i === 5" d="M13 17C29 7 40 3 52 4s22 10 34 10 20-4 28-8c-9 7-18 13-33 13S61 13 49 10s-20-1-36 7z" />
                <path v-else-if="i === 1" d="M14 16C29 7 40 3 52 5s22 8 34 8 20-3 28-8c-9 9-18 14-33 14S61 14 49 11s-20-1-35 5z" fill="#333" stroke="#999" stroke-width="2" filter="url(#soft)" />
                <path v-else-if="i === 2" d="M13 17C28 6 45 4 63 10s31 9 50-4" fill="none" stroke="#000" stroke-width="10" stroke-linecap="round" />
                <path v-else :stroke-width="i === 3 ? 5 : 10" d="M12 17C28 6 45 3 63 10s31 9 51-4" fill="none" stroke="#000" :stroke-linecap="i === 3 ? 'butt' : 'round'" shape-rendering="crispEdges" />
              </svg>
              <span>{{ b }}</span>
            </button>
          </div>
          <div class="track"></div>
        </section>
        <div class="foot dark"><Icon n="page" :w="15" /><Icon n="trash" :w="15" /></div>

        <div class="tabs top">
          <button class="grip" aria-label="菜单"><Icon n="grip" :w="10" :h="9" /></button>
          <button class="tab active"><Icon n="nib" :w="8" :h="18" /><Icon n="gear" class="gear" :w="10" /><span class="tabtext wide">“涂改” 工具属性</span></button>
        </div>
        <section class="preview">
          <svg width="87" height="39" viewBox="0 0 87 39" aria-hidden="true"><path d="M0 0h87v39H0z" fill="#b3b3b3" /><path d="M17 30C34 8 62 4 92 20" fill="none" stroke="#f4f8fd" stroke-width="18" stroke-linecap="round" /></svg>
          <span>涂改</span>
          <button aria-label="详细"><Icon n="wrenchmag" :w="18" /></button>
        </section>
        <section class="props">
          <div class="proplist">
            <div v-for="s in sliders" :key="s.id" class="prop">
              <button v-if="s.plus" class="plus" aria-label="展开"></button><i v-else></i>
              <div class="slide"><label :for="s.id">{{ s.label }}</label><input :id="s.id" type="range" max="48" :value="s.fill" :style="{ '--fill': s.fill + 'px' }" /></div>
              <input class="num" :value="s.value" :aria-label="s.label" />
              <span class="spin"><button aria-label="增加"></button><button aria-label="减少"></button></span>
              <button class="dyn" aria-label="动态"></button>
            </div>
            <div class="prop opts">
              <span class="fade">消除锯</span>
              <div class="radios four">
                <label v-for="n in 4" :key="n" :class="{ on: aa === n - 1 }">
                  <input v-model="aa" type="radio" name="aa" :value="n - 1" :aria-label="'消除锯齿 ' + n" />
                  <i :class="'soft' + n"></i>
                </label>
                <button class="drop" aria-label="更多"></button>
              </div>
            </div>
            <div class="prop opts">
              <label class="check"><input v-model="vecOn" type="checkbox" />矢量擦除</label>
              <div class="radios two">
                <label v-for="n in 2" :key="n" :class="{ on: vec === n - 1 }">
                  <input v-model="vec" type="radio" name="vec" :value="n - 1" :aria-label="'矢量擦除 ' + n" />
                  <Icon :n="'vec' + n" :w="28" :h="20" />
                </label>
                <button class="drop" aria-label="更多"></button>
              </div>
            </div>
            <div class="prop">
              <i></i>
              <div class="slide"><label for="stab">手颤修正</label><input id="stab" type="range" max="48" value="0" :style="{ '--fill': '0px' }" /></div>
              <input class="num" value="0" aria-label="手颤修正" />
              <span class="spin"><button aria-label="增加"></button><button aria-label="减少"></button></span>
            </div>
          </div>
          <div class="track"></div>
        </section>
        <div class="foot dark"><Icon n="reset" :w="17" /><Icon n="wrench" :w="17" /></div>

        <div class="tabs top palette">
          <button class="grip" aria-label="菜单"><Icon n="grip" :w="10" :h="9" /></button>
          <button class="tab active" aria-label="色环"><i class="miniwheel"></i></button>
          <button v-for="t in ['list', 'grid', 'mix', 'app', 'book']" :key="t" class="tab" :aria-label="t"><Icon :n="'t-' + t" :w="18" :h="12" /></button>
        </div>
        <section class="color">
          <div class="wheelarea">
            <div class="wheel"><div class="hole"><div class="sv"></div></div><i class="hue"></i><i class="pick"></i></div>
            <div class="hsv"><span v-for="c in hsv" :key="c[0]"><b>{{ c[0] }}</b><em>{{ c[1] }}</em></span></div>
            <div class="swatches small"><i class="back"></i><i class="front"></i><i class="clear"></i></div>
            <i class="play"></i>
          </div>
          <div class="stripes"></div>
        </section>
      </aside>

      <aside class="col sizes">
        <header class="fold end"><Icon n="chl" :w="12" :h="14" /></header>
        <div class="tabs"><button class="grip" aria-label="菜单"><Icon n="grip" :w="10" :h="9" /></button><button class="tab active grow near" aria-label="笔刷尺寸"><Icon n="nib" :w="8" :h="18" /><Icon n="dots" :w="12" :h="18" /></button></div>
        <div class="sizewrap">
          <div class="sizelist">
            <button v-for="s in sizes" :key="s[0]"><span class="dotbox"><i :style="{ width: s[1] + 'px', height: s[1] + 'px' }"></i></span><span>{{ s[0] }}</span></button>
          </div>
          <div class="vscroll"><button class="up" aria-label="上"></button><i class="thumb"></i><button class="down" aria-label="下"></button></div>
        </div>
      </aside>

      <main class="center">
        <div class="commands">
          <template v-for="(g, i) in commandGroups" :key="i">
            <button v-for="(c, j) in g" :key="j" :aria-label="c"><Icon :n="c" :w="22" /></button>
            <i class="sep"></i>
          </template>
          <button class="tutorial">使用教程</button>
          <button aria-label="学习"><Icon n="hat" :w="22" /></button>
        </div>
        <div class="docbar"><button aria-label="文档列表"></button></div>
        <div class="canvas"></div>
        <div class="bottom">
          <div class="tabs">
            <button class="grip" aria-label="菜单"><Icon n="grip" :w="10" :h="9" /></button>
            <button class="tab active"><Icon n="timeline" :w="16" :h="13" /><span class="tabtext">时间轴</span></button>
            <button class="tab"><Icon n="camera" :w="14" :h="8" /><span class="tabtext">四面图</span></button>
          </div>
          <button class="raise" aria-label="展开"></button>
        </div>
      </main>

      <aside class="materials">
        <header class="fold both"><Icon n="chr" :w="12" :h="14" /><Icon n="ch1" :w="6" :h="14" /></header>
        <button v-for="(m, i) in materials" :key="i" :aria-label="'素材 ' + (i + 1)">
          <Icon v-if="!m" n="folder" :w="30" :h="26" />
          <span v-else class="stack"><Icon n="folder2" :w="30" /><Icon class="badge" :n="m" :w="16" /></span>
        </button>
      </aside>

      <aside class="right">
        <header class="fold start"><Icon n="chr" :w="12" :h="14" /></header>
        <div class="tabs">
          <button class="grip" aria-label="菜单"><Icon n="grip" :w="10" :h="9" /></button>
          <button class="tab active"><Icon class="low" n="redrect" :w="18" :h="15" /><span class="tabtext">导航器</span></button>
          <button v-for="t in ['img', 'ball', 'info']" :key="t" class="tab" :aria-label="t"><Icon :n="'t-' + t" :w="16" :h="13" /></button>
        </div>
        <section class="navview"></section>
        <section class="navctl">
          <svg width="56" height="13" viewBox="0 0 56 13" aria-hidden="true"><path d="M.5 .5h55v12H.5z" fill="#fff" stroke="#a0a2a6" /><path d="M1 12.500L56 1v12z" fill="#a0a2a6" /></svg>
          <button aria-label="缩小"><Icon n="zout" :w="16" /></button><button aria-label="放大"><Icon n="zin" :w="16" /></button><button aria-label="实际大小"><Icon n="fit" :w="16" /></button><i></i>
          <button aria-label="适合"><Icon n="fit2" :w="16" /></button><button aria-label="全屏"><Icon n="fit3" :w="16" /></button>
          <svg width="56" height="13" viewBox="0 0 56 13" aria-hidden="true"><path d="M.5 .5h55v12H.5z" fill="#fff" stroke="#a0a2a6" /><path d="M0 0c5 5 7 11 13 12h10C30 10 32 1 40 1c6 0 10 5 16 11v1H0z" fill="#a0a2a6" /></svg>
          <button aria-label="左转"><Icon n="rotl" :w="16" /></button><button aria-label="右转"><Icon n="rotr" :w="16" /></button><button class="pale" aria-label="复位"><Icon n="reset" :w="16" /></button><i></i>
          <button aria-label="左右翻转"><Icon n="fliph" :w="16" /></button><button aria-label="上下翻转"><Icon n="flipv" :w="16" /></button>
        </section>
        <div class="tabs top">
          <button class="grip" aria-label="菜单"><Icon n="grip" :w="10" :h="9" /></button>
          <button class="tab active"><Icon n="redcheck" :w="18" :h="17" /><span class="tabtext">图层属性</span></button>
          <button v-for="t in ['anim', 'comp']" :key="t" class="tab" :aria-label="t"><Icon :n="'t-' + t" :w="16" :h="13" /></button>
        </div>
        <section class="layerprop"><div></div><i class="rail"></i></section>
        <div class="tabs top">
          <button class="grip" aria-label="菜单"><Icon n="grip" :w="10" :h="9" /></button>
          <button class="tab active"><Icon n="layers" :w="18" :h="16" /><span class="tabtext">图层</span></button>
          <button v-for="t in ['hist', 'clap']" :key="t" class="tab" :aria-label="t"><Icon :n="'t-' + t" :w="18" :h="13" /></button>
        </div>
        <section class="layerctl">
          <div class="row"><span class="combo mode"><select aria-label="混合模式"><option></option></select></span><input class="opacity" aria-label="不透明度" /></div>
          <div class="row icons first"><button v-for="t in ['clip', 'light', 'lock', 'lockt']" :key="t" :aria-label="t"><Icon :n="'l-' + t" :w="16" /></button><span class="combo"><select aria-label="遮罩"><option></option></select></span><span class="combo"><select aria-label="标尺"><option></option></select></span></div>
          <div class="row icons second"><button class="pale" aria-label="新图层"><Icon n="page" :w="16" /></button><button v-for="t in ['new3', 'fold', 'down', 'up', 'mask', 'apply']" :key="t" :aria-label="t"><Icon :n="'l-' + t" :w="17" :h="16" /></button><button class="pale" aria-label="删除"><Icon n="trash" :w="16" /></button></div>
        </section>
        <section class="layers"><div></div><i class="rail"></i></section>
      </aside>
    </div>
  </div>
</template>

<style>
body { background: #f4f8fd; }
</style>

<style scoped>
.app { --pale: #f4f8fd; --grey: #e8e8ea; --line: #a4a7ad; --mid: #b4b6ba; height: 100vh; display: flex; flex-direction: column; overflow: hidden; background: var(--pale); color: #000; font: 12px/14px "Liberation Sans", "Noto Sans CJK SC", sans-serif; }
.app *, .app *::before, .app *::after { box-sizing: border-box; }
.defs { position: absolute; width: 0; height: 0; }
.icon { display: block; flex: none; }
button { margin: 0; padding: 0; border: 0; background: none; font: inherit; color: inherit; display: flex; align-items: center; justify-content: center; }
input, select { margin: 0; padding: 0; font: inherit; }

.menubar { flex: none; height: 25px; display: flex; gap: 22px; padding: 2px 0 0 14px; border-top: 1px solid #a9abae; border-bottom: 1px solid #c4c6ca; font: 10px/21px "Noto Sans", "Noto Sans CJK SC", sans-serif; }
.workspace { flex: 1; min-height: 0; display: flex; background: var(--grey); }
.col, .right, .materials { display: flex; flex-direction: column; flex: none; min-height: 0; overflow: hidden; }
.col { background: var(--pale); border-right: 2px solid #c8cace; }
.tools { width: 43px; padding-left: 1px; }
.sub { width: 178px; }
.sizes { width: 55px; }
.fold { flex: none; height: 20px; display: flex; align-items: center; background: var(--grey); border-bottom: 1px solid var(--line); margin-bottom: 1px; }
.end { justify-content: flex-end; }
.both { justify-content: space-between; padding: 0 4px 0 0; }

.tabs { flex: none; height: 17px; margin-bottom: 5px; display: flex; align-items: flex-end; background: #ebebed; border: 1px solid var(--line); }
.tabs.top { margin-bottom: 5px; }
.grip { width: 18px; height: 15px; padding-top: 2px; }
.tab { flex: none; height: 14px; align-items: flex-start; padding: 1px 5px 0; border: 1px solid var(--line); border-bottom: 0; background: #d6d7dc; margin-left: -1px; }
.tab:not(.active) { overflow: hidden; }
.tab.active { height: 15px; margin: 0 0 -1px; padding: 2px 4px 0; background: var(--pale); overflow: visible; justify-content: flex-start; }
.tab.grow { flex: 1; justify-content: center; padding: 2px 0 0 4px; }
.tab.near { justify-content: flex-start; }
.gear { margin-top: 5px; }
.tabtext { font-size: 8px; line-height: 12px; padding: 1px 0 0 4px; color: #333; white-space: nowrap; }
.wide { padding-left: 6px; }

.toolset { display: flex; flex-direction: column; gap: 1px; padding-right: 1px; }
.toolgroup { border: 1px solid #90939a; }
.toolgroup button { width: 25px; height: 26px; margin: 0 auto; border: 1px solid transparent; }
.toolgroup button.on { background: linear-gradient(#d2e6f2, #bdd5e4); border-color: #8fa9bb; border-radius: 2px; }
.letter { font: 700 26px/26px "Liberation Serif", serif; color: #333; }
.swatches { position: relative; flex: none; }
.swatches i { position: absolute; }
.big { height: 49px; }
.big .front { left: 1px; top: 1px; width: 24px; height: 24px; }
.big .back { left: 15px; top: 15px; width: 24px; height: 24px; background: #000; border: 1px solid #999; }
.front { background: #fff; outline: 2px solid #7fbbe0; outline-offset: -2px; box-shadow: inset 0 0 0 3px #000; }
.big .clear { left: 1px; top: 40px; width: 37px; height: 9px; }
.clear { background: repeating-conic-gradient(#fff 0 25%, #888 0 50%) 0 0 / 8px 8px; border: 1px solid #aaa; }

.groupbar { flex: none; height: 29px; border-bottom: 1px solid #70737a; border-left: 1px solid var(--line); }
.groupbar button { width: 149px; height: 27px; justify-content: flex-start; gap: 3px; background: linear-gradient(#cfe5f2, #b4cfdf); border: 1px solid #8fa9bb; border-radius: 2px; }
.brushes, .props { flex: none; display: flex; border-left: 1px solid var(--line); }
.list { flex: 1; min-width: 0; }
.list button { display: grid; grid-template-columns: 1fr; width: 100%; height: 25px; border-bottom: 1px solid #9fa2a8; }
.list button > * { grid-area: 1 / 1; }
.list svg { justify-self: start; }
.list span { justify-self: end; align-self: end; padding: 0 3px 0 2px; line-height: 14px; background: rgba(244, 248, 253, .6); }
.list .on { background: linear-gradient(#cfe5f2, #b4cfdf); }
.track { flex: none; width: 13px; background: #d6d7dc; border-right: 1px solid var(--line); }
.foot { flex: none; height: 24px; display: flex; align-items: center; justify-content: flex-end; gap: 5px; padding: 2px 2px 0 0; border-bottom: 2px solid #c4c6ca; margin-bottom: 1px; }
.dark { color: #555; }
.preview { flex: none; height: 41px; display: grid; border: 1px solid var(--line); border-bottom-color: #70737a; }
.preview > * { grid-area: 1 / 1; }
.preview span { justify-self: start; align-self: start; line-height: 16px; background: rgba(214, 215, 220, .85); }
.preview button { justify-self: end; align-self: end; padding: 1px; }
.proplist { flex: 1; min-width: 0; height: 155px; border-bottom: 1px solid var(--line); }
.prop { height: 29px; margin: 0 4px 0 5px; display: grid; grid-template-columns: 11px 74px 40px 12px 17px; align-items: center; background: linear-gradient(#d8dbe0, #d8dbe0) 5px 100% / 100% 1px no-repeat; }
.prop:last-child { background: none; }
.plus { width: 10px; height: 10px; border: 1px solid #888; border-radius: 2px; background: linear-gradient(#222, #222) center / 6px 1px no-repeat, linear-gradient(#222, #222) center / 1px 6px no-repeat; }
.slide { display: flex; flex-direction: column; white-space: nowrap; }
.slide input { appearance: none; width: 49px; height: 9px; margin-left: 21px; border-left: 1px solid #a0a2a8; background: linear-gradient(#a0a2a8, #a0a2a8) 0 100% / 100% 1px no-repeat, linear-gradient(#a0a2a8, #a0a2a8) 100% 100% / 1px 3px no-repeat, linear-gradient(#a0a2a8, #a0a2a8) 0 0 / var(--fill) 1px no-repeat, linear-gradient(#a0a2a8, #a0a2a8) calc(var(--fill) - 1px) 0 / 1px 100% no-repeat, linear-gradient(90deg, #fff, #ccc) 0 0 / var(--fill) 100% no-repeat; }
.slide input::-webkit-slider-thumb { appearance: none; width: 1px; height: 1px; }
.num { width: 40px; border: 0; background: none; text-align: right; font: 10px/14px "DejaVu Sans Mono", monospace; }
.spin { display: flex; flex-direction: column; gap: 3px; padding-left: 2px; }
.spin button { width: 9px; height: 5px; background: #999ba0; clip-path: polygon(50% 0, 100% 100%, 0 100%); }
.spin button + button { clip-path: polygon(0 0, 100% 0, 50% 100%); }
.dyn { width: 15px; height: 24px; margin-left: 2px; border: 1px solid #aaacb2; border-radius: 2px; }
.dyn::before { content: ""; width: 6px; height: 6px; background: #808286; }
.prop.opts { display: flex; justify-content: space-between; padding-left: 11px; }
.fade { white-space: nowrap; font-size: 9px; -webkit-mask: linear-gradient(90deg, #000 60%, transparent 110%); mask: linear-gradient(90deg, #000 60%, transparent 110%); }
.radios { height: 24px; display: flex; border: 1px solid #aaacb2; border-radius: 3px; }
.radios label { position: relative; display: flex; align-items: center; justify-content: center; overflow: hidden; }
.radios input { position: absolute; opacity: 0; }
.four label { width: 25px; }
.two label { width: 28px; }
.radios .on { background: linear-gradient(#cfe5f2, #bcd6e6); box-shadow: inset 0 0 0 1px #8fb4cb; }
.radios i { width: 18px; height: 18px; border-radius: 50%; }
.soft1 { background: radial-gradient(#444 0 7px, transparent 8px); }
.soft2 { background: radial-gradient(#444 0 4px, #c4c4c6 5px 8px, transparent 9px); }
.soft3 { background: radial-gradient(#444 0 3px, #808284 4px 6px, #b4b6b8 7px 8px, transparent 9px); }
.soft4 { background: radial-gradient(#444 0 2px, #909294 5px, #d4d6da 8px, transparent 9px); }
.drop { width: 12px; }
.drop::before { content: ""; width: 9px; height: 5px; background: #555; clip-path: polygon(0 0, 100% 0, 50% 100%); }
.check { display: flex; align-items: center; gap: 4px; }
.check input { appearance: none; width: 13px; height: 13px; border: 1px solid #999; border-radius: 2px; background: #fff; }
.check input:checked::before { content: ""; display: block; width: 11px; height: 11px; background: #000; clip-path: polygon(10% 45%, 25% 40%, 42% 68%, 85% 5%, 92% 10%, 48% 100%, 36% 100%); }

.sub .palette { margin-bottom: 4px; }
.palette .tab { width: 29px; padding: 1px 5px 0; }
.palette .tab.active { width: 27px; padding-left: 4px; }
.palette .tab:last-child { flex: 1; min-width: 0; justify-content: flex-start; }
.palette .tab.active, .bottom .tab.active { padding-top: 1px; }
.miniwheel { flex: none; width: 16px; height: 16px; border-radius: 50%; background: radial-gradient(#fff 0 3px, transparent 4px), conic-gradient(#ff0, #0f0, #0ff, #00f, #f0f, #f00, #ff0); }
.color { flex: 1; min-height: 0; display: flex; }
.wheelarea { position: relative; flex: 1; padding-left: 7px; }
.wheel { position: relative; width: 152px; height: 152px; display: grid; place-items: center; border: 1px solid #aaa; border-radius: 50%; background: conic-gradient(#f0f010, #10f010 60deg, #10f0f0 120deg, #1010f0 180deg, #f010f0 240deg, #f01010 300deg, #f0f010); }
.hole { width: 127px; height: 127px; display: grid; place-items: center; border: 1px solid #aaa; border-radius: 50%; background: var(--pale); }
.sv { width: 81px; height: 81px; border: 1px solid #a0a2a6; background: linear-gradient(transparent, #000), linear-gradient(90deg, #fff, #ff5100); }
.hue { position: absolute; left: 25px; top: 16px; width: 10px; height: 13px; background: #ef5a12; border: 2px solid #fff; outline: 1px solid #111; transform: rotate(-41deg); }
.pick { position: absolute; left: 30px; top: 31px; width: 10px; height: 10px; border: 1px solid #777; border-radius: 50%; background: #fff; }
.hsv { display: flex; gap: 3px; padding: 0 0 0 35px; }
.hsv span { width: 29px; display: flex; justify-content: space-between; align-items: center; }
.hsv b { width: 8px; height: 8px; background: #0c0c40; color: #fff; font: 700 8px/8px "Liberation Sans", sans-serif; text-align: center; }
.hsv em { font: 10px/13px "DejaVu Sans Mono", monospace; }
.small { position: absolute; left: 0; top: 127px; width: 30px; height: 40px; }
.small .front { left: 0; top: 0; width: 18px; height: 18px; }
.small .back { left: 11px; top: 11px; width: 18px; height: 18px; background: #000; border: 1px solid #999; }
.small .clear { left: 0; top: 30px; width: 29px; height: 9px; }
.play { position: absolute; left: 144px; top: 147px; width: 17px; height: 17px; border-radius: 50%; background: radial-gradient(#fff 0 5px, transparent 6px), conic-gradient(#ff0, #0f0, #0ff, #00f, #f0f, #f00, #ff0); }
.play::before { content: ""; position: absolute; left: 6px; top: 5px; width: 7px; height: 7px; background: #6b3a3a; clip-path: polygon(0 0, 100% 50%, 0 100%); }
.stripes { flex: none; width: 9px; background: repeating-linear-gradient(90deg, #a4a6aa 0 1px, #d6d7dc 1px 3px); }

.sizewrap { flex: 1; min-height: 0; display: flex; border-top: 1px solid #70737a; border-left: 1px solid var(--line); }
.sizelist { flex: 1; overflow: hidden; }
.sizelist button { width: 100%; height: 40px; flex-direction: column; justify-content: flex-start; padding-right: 1px; border-bottom: 1px solid #9fa2a8; font: 10px/12px "DejaVu Sans Mono", monospace; }
.dotbox { height: 26px; display: flex; align-items: center; padding-top: 5px; }
.dotbox i { border-radius: 50%; background: #000; }
.vscroll { flex: none; width: 13px; display: flex; flex-direction: column; background: #d6d7dc; border-left: 1px solid var(--line); }
.vscroll button { flex: none; height: 12px; background: var(--pale); border: 1px solid var(--mid); border-radius: 2px; }
.vscroll button::before { content: ""; width: 6px; height: 3px; background: #555; clip-path: polygon(50% 0, 100% 100%, 0 100%); }
.vscroll .down { margin-top: auto; }
.vscroll .down::before { clip-path: polygon(0 0, 100% 0, 50% 100%); }
.thumb { flex: none; height: 240px; border: 1px solid var(--line); border-radius: 2px; background: repeating-linear-gradient(#999 0 1px, transparent 1px 3px) center / 7px 7px no-repeat, var(--pale); }

.center { flex: 1; min-width: 0; display: flex; flex-direction: column; background: var(--pale); }
.commands { flex: none; height: 26px; display: flex; align-items: center; border-bottom: 1px solid var(--mid); }
.commands button { width: 24px; height: 24px; }
.sep { width: 8px; height: 21px; background: linear-gradient(#d0d2d6, #d0d2d6) center / 1px 100% no-repeat; }
.commands .tutorial { width: 76px; height: 20px; margin: 0 2px; background: #f0f0f3; border: 1px solid #b4b6ba; color: #444; }
.docbar { flex: none; height: 18px; display: flex; justify-content: flex-end; background: var(--grey); }
.docbar button { width: 12px; background: var(--pale); border: 1px solid var(--mid); border-radius: 2px; }
.docbar button::before { content: ""; flex: none; width: 6px; height: 3px; background: #b0b2b6; clip-path: polygon(0 0, 100% 0, 50% 100%); }
.canvas { flex: 1; border: 1px solid var(--line); border-right: 0; }
.bottom { flex: none; display: flex; gap: 7px; padding: 2px 2px 1px 1px; }
.bottom .tabs { flex: 1; margin: 0; background: linear-gradient(90deg, #f0f0f2, #e4e5e8); }
.bottom .tab:not(.active) { align-items: center; width: 56px; color: #999; }
.bottom .tab:not(.active) .tabtext { color: #999; padding-top: 0; }
.raise { align-self: flex-end; width: 11px; height: 7px; background: #97999d; clip-path: polygon(50% 0, 100% 100%, 70% 100%, 50% 60%, 30% 100%, 0 100%); }

.materials { width: 41px; gap: 4px; border-left: 2px solid var(--line); align-items: flex-start; padding-left: 2px; }
.materials .fold { width: 100%; margin-bottom: -2px; }
.materials > button { flex: none; width: 34px; height: 40px; background: var(--pale); border: 1px solid #9a9da4; }
.stack { position: relative; display: block; width: 30px; height: 30px; }
.badge { position: absolute; right: 2px; bottom: 3px; }

.right { width: 166px; background: var(--pale); border-left: 1px solid #c0c2c6; }
.right .tabs { border-right: 0; border-left: 0; }
.right .tab.active .tabtext { padding-right: 1px; }
.right .tab:not(.active) { width: 29px; }
.low { margin-top: 1px; }
.navview { flex: none; height: 114px; border-top: 1px solid #70737a; border-bottom: 1px solid var(--mid); border-left: 1px solid var(--line); }
.navctl { flex: none; height: 44px; display: grid; grid-template-columns: 61px 20px 20px 20px 6px 18px 20px; grid-auto-rows: 20px; align-items: center; padding: 2px 0 0 5px; border-bottom: 2px solid #c4c6ca; }
.navctl > i { width: 1px; height: 15px; background: #d0d2d6; justify-self: center; }
.navctl button { overflow: hidden; }
.navctl button:nth-child(7n) { justify-content: flex-start; padding-left: 2px; }
.pale { color: #b4b6ba; }
.layerprop { flex: none; height: 117px; display: flex; border-top: 1px solid #70737a; border-left: 1px solid var(--line); border-bottom: 2px solid #b4b6ba; margin-bottom: 1px; }
.layerprop div, .layers div { flex: 1; }
.rail { width: 6px; background: #d6d7dc; }
.layerctl { flex: none; height: 67px; overflow: hidden; }
.row { display: flex; align-items: center; }
.combo { position: relative; flex: none; width: 33px; height: 20px; }
.combo select { appearance: none; width: 100%; height: 100%; border: 1px solid #b4b6ba; border-radius: 3px; background: var(--pale); }
.combo::after { content: ""; position: absolute; right: 4px; top: 8px; width: 9px; height: 5px; background: #a8aaae; clip-path: polygon(0 0, 100% 0, 50% 100%); }
.mode { width: 85px; margin: 0 6px 0 1px; }
.opacity { width: 43px; height: 9px; border: 1px solid #a0a2a6; background: #fff; }
.icons button { flex: none; width: 20px; height: 20px; }
.first { height: 23px; padding-left: 26px; border-bottom: 1px solid #d0d2d6; }
.second { height: 24px; padding-left: 12px; }
.layers { flex: 1; display: flex; border-top: 1px solid #70737a; border-left: 1px solid var(--line); padding-left: 3px; }
.layers div { border-left: 1px solid #888b92; }
</style>
